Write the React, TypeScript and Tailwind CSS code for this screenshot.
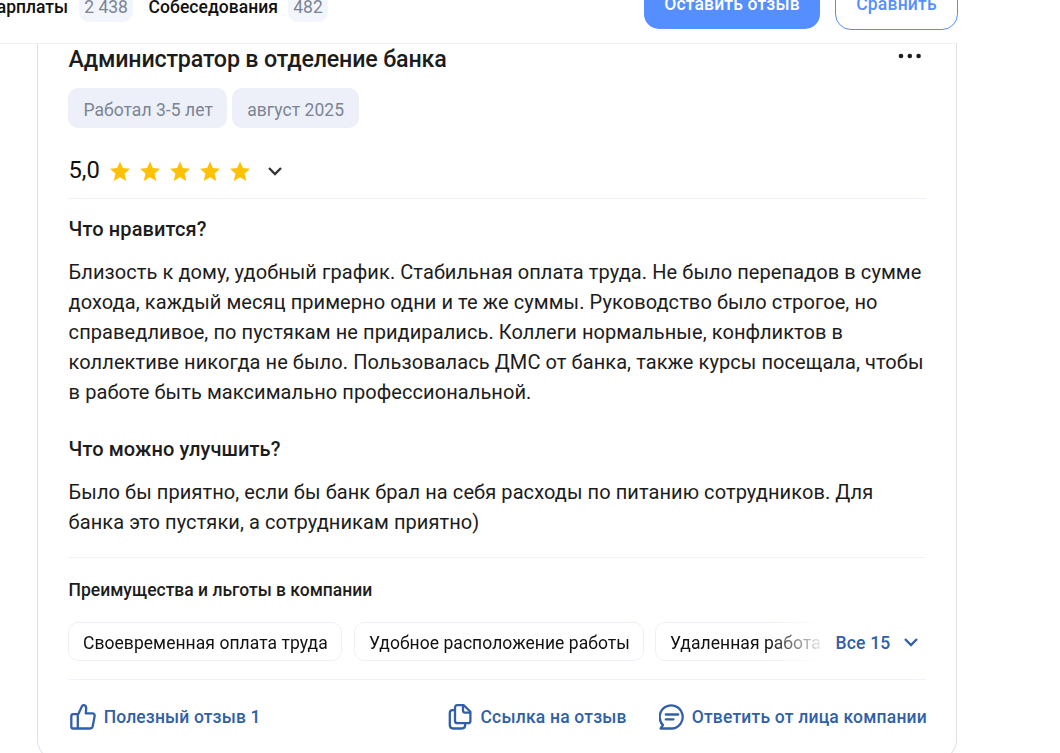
import type { ReactNode } from "react";

const benefits = [
  { label: "Своевременная оплата труда", className: "w-[274px]" },
  { label: "Удобное расположение работы", className: "ml-[12px] w-[290px]" },
  { label: "Удаленная работа", className: "ml-[11px] w-[180px]" },
];

function Star() {
  return (
    <svg width="20" height="20" viewBox="0 0 20 20" fill="#ffc107">
      <path d="M10 0.4l2.9 6.7 7.1.6-5.4 4.7 1.7 7.6L10 16.2 3.7 20l1.7-7.6L0 7.7l7.1-.6z" />
    </svg>
  );
}

function Chevron({ className }: { className: string }) {
  return (
    <svg
      width="16"
      height="10"
      viewBox="0 0 16 10"
      fill="none"
      stroke="currentColor"
      strokeWidth="2.3"
      className={className}
    >
      <path d="M2 2l6 6 6-6" />
    </svg>
  );
}

function ThumbIcon() {
  return (
    <svg width="26" height="26" viewBox="0 0 26 26" fill="none" stroke="currentColor" strokeWidth="2.3" strokeLinejoin="round">
      <path d="M7.8 10.2H3.4Q1.3 10.2 1.3 12.3V22.4Q1.3 24.5 3.4 24.5H20.2Q22.3 24.5 22.7 22.4L24.6 12.3Q25 9.4 22.3 9.4H15.8L16.2 4.3Q16.2 1.2 13.3 1.2Q12.4 1.2 12 2.1L8.7 9.3Q8.4 10.2 7.8 10.2V24.5" />
    </svg>
  );
}

function CopyIcon() {
  return (
    <svg width="24" height="26" viewBox="0 0 24 26" fill="none" stroke="currentColor" strokeWidth="2.3" strokeLinejoin="round">
      <path d="M9.5 1.2H15.8L22.4 7.8V16.9Q22.4 19.2 20.1 19.2H9.5Q7 19.2 7 16.7V3.7Q7 1.2 9.5 1.2z" />
      <path d="M15 1.4V6.6Q15 8.6 17 8.6H22.2" />
      <path d="M7 6.2H4.6Q1.8 6.2 1.8 9V21Q1.8 24.5 5.3 24.5H13.8Q17.2 24.5 17.2 21.1V19.4" />
    </svg>
  );
}

function ReplyIcon() {
  return (
    <svg width="26" height="26" viewBox="0 0 26 26" fill="none" stroke="currentColor" strokeWidth="2.3" strokeLinejoin="round" strokeLinecap="round">
      <path d="M1.6 24.5L4 21.1A11.5 11.6 0 1 1 13.2 24.5z" />
      <path d="M6.8 10.5H19.2M6.8 15.4H14.4" />
    </svg>
  );
}

function Action({ icon, children, className }: { icon: ReactNode; children: ReactNode; className: string }) {
  return (
    <button className={`flex items-center text-[17.5px] leading-[30px] font-medium whitespace-nowrap text-[#315fa8] ${className}`}>
      {icon}
      {children}
    </button>
  );
}

function Header() {
  return (
    <header className="flex h-[44px] w-[958px] items-end justify-between overflow-hidden border-b border-[#eef0f8]">
      <nav className="mb-[21px] flex w-[328px] shrink-0 items-center justify-end text-[17.5px] leading-[30px] whitespace-nowrap">
        <span className="font-medium text-[#111]">Зарплаты</span>
        <span className="ml-[11px] w-[54px] shrink-0 rounded-[10px] bg-[#f3f5fc] text-center text-[#7b8494]">2 438</span>
        <span className="ml-[15.5px] font-medium tracking-[0.04px] text-[#111]">Собеседования</span>
        <span className="ml-[10px] w-[40px] shrink-0 rounded-[10px] bg-[#f3f5fc] text-center text-[#7b8494]">482</span>
      </nav>
      <div className="mb-[13px] flex items-end gap-[15px] text-[17.5px] font-medium">
        <button className="mb-px h-[50px] w-[176px] rounded-[15px] bg-[#558fff] tracking-[0.18px] text-white">Оставить отзыв</button>
        <button className="h-[52px] w-[123px] rounded-[16px] border border-[#558fff] tracking-[0.2px] text-[#558fff]">Сравнить</button>
      </div>
    </header>
  );
}

export default function App() {
  return (
    <div className="h-screen overflow-hidden bg-white font-[Roboto,sans-serif] text-[#1c1c1c]">
      <Header />
      <article className="ml-[37px] h-[716px] w-[920px] rounded-b-[20px] border-x border-b border-[#dde2ee] px-[30px]">
        <div className="flex h-[30px] items-center justify-between">
          <h2 className="pl-[0.6px] text-[23.25px] leading-[30px] font-medium tracking-[-0.18px]">Администратор в отделение банка</h2>
          <svg width="24" height="6" viewBox="0 0 24 6" fill="#1c1c1c" className="mr-[4px] mb-[6px]">
            <circle cx="3" cy="3" r="2.3" />
            <circle cx="11.8" cy="3" r="2.3" />
            <circle cx="20.6" cy="3" r="2.3" />
          </svg>
        </div>

        <div className="mt-[14px] flex gap-[5px] text-[17.5px] text-[#7b8494]">
          <span className="flex h-[40px] w-[159px] items-center rounded-[10px] bg-[#edf0f8] pt-[4px] pl-[15.4px] tracking-[0.05px]">Работал 3-5 лет</span>
          <span className="flex h-[40px] w-[127px] items-center rounded-[10px] bg-[#edf0f8] pt-[4px] pl-[15.2px] tracking-[0.05px]">август 2025</span>
        </div>

        <div className="mt-[28px] flex h-[30px] items-center">
          <span className="w-[42px] pl-[0.5px] text-[23.75px] text-[#111]">5,0</span>
          <div className="flex gap-[10px]">
            {[1, 2, 3, 4, 5].map(n => (
              <Star key={n} />
            ))}
          </div>
          <Chevron className="ml-[17px] text-[#333]" />
        </div>

        <section className="mt-[12px] border-t border-[#f1f3fa] pl-[0.6px] text-[20px] leading-[30px] tracking-[0.08px]">
          <h3 className="mt-[15px] font-medium tracking-[0.12px]">Что нравится?</h3>
          <p className="mt-[13px] whitespace-nowrap">
            Близость к дому, удобный график. Стабильная оплата труда. Не было перепадов в сумме
            <br />
            дохода, каждый месяц примерно одни и те же суммы. Руководство было строгое, но
            <br />
            справедливое, по пустякам не придирались. Коллеги нормальные, конфликтов в
            <br />
            коллективе никогда не было. Пользовалась ДМС от банка, также курсы посещала, чтобы
            <br />
            в работе быть максимально профессиональной.
          </p>
          <h3 className="mt-[27px] font-medium tracking-[0.1px]">Что можно улучшить?</h3>
          <p className="mt-[13px] whitespace-nowrap">
            Было бы приятно, если бы банк брал на себя расходы по питанию сотрудников. Для
            <br />
            банка это пустяки, а сотрудникам приятно)
          </p>
        </section>

        <section className="mt-[20px] border-t border-[#f1f3fa]">
          <h4 className="mt-[17px] pl-[0.6px] text-[17.5px] leading-[30px] font-medium">Преимущества и льготы в компании</h4>
          <div className="mt-[17px] flex h-[39px] items-center">
            <div className="flex w-[752px] overflow-hidden mask-[linear-gradient(to_right,#000_700px,transparent_758px)]">
              {benefits.map(b => (
                <span
                  key={b.label}
                  className={`flex h-[39px] shrink-0 items-center rounded-[10px] border border-[#eef0f8] pt-[3px] pl-[14px] text-[17.5px] tracking-[0.05px] whitespace-nowrap text-[#111] ${b.className}`}
                >
                  {b.label}
                </span>
              ))}
            </div>
            <button className="ml-[15.5px] flex items-center pt-[3px] text-[17.5px] font-medium whitespace-nowrap text-[#315fa8]">
              <span className="w-[67.5px] text-left tracking-[0.2px]">Все 15</span>
              <Chevron className="mb-[2px]" />
            </button>
          </div>
        </section>

        <footer className="mt-[18px] flex items-center border-t border-[#f1f3fa] pt-[22px]">
          <Action className="tracking-[0.14px]" icon={<span className="ml-[2px] w-[33.7px]"><ThumbIcon /></span>}>
            Полезный отзыв 1
          </Action>
          <div className="-mr-[1px] ml-auto flex gap-[32px]">
            <Action className="tracking-[0.2px]" icon={<span className="w-[32px]"><CopyIcon /></span>}>
              Ссылка на отзыв
            </Action>
            <Action className="tracking-[0.2px]" icon={<span className="w-[33px]"><ReplyIcon /></span>}>
              Ответить от лица компании
            </Action>
          </div>
        </footer>
      </article>
    </div>
  );
}
